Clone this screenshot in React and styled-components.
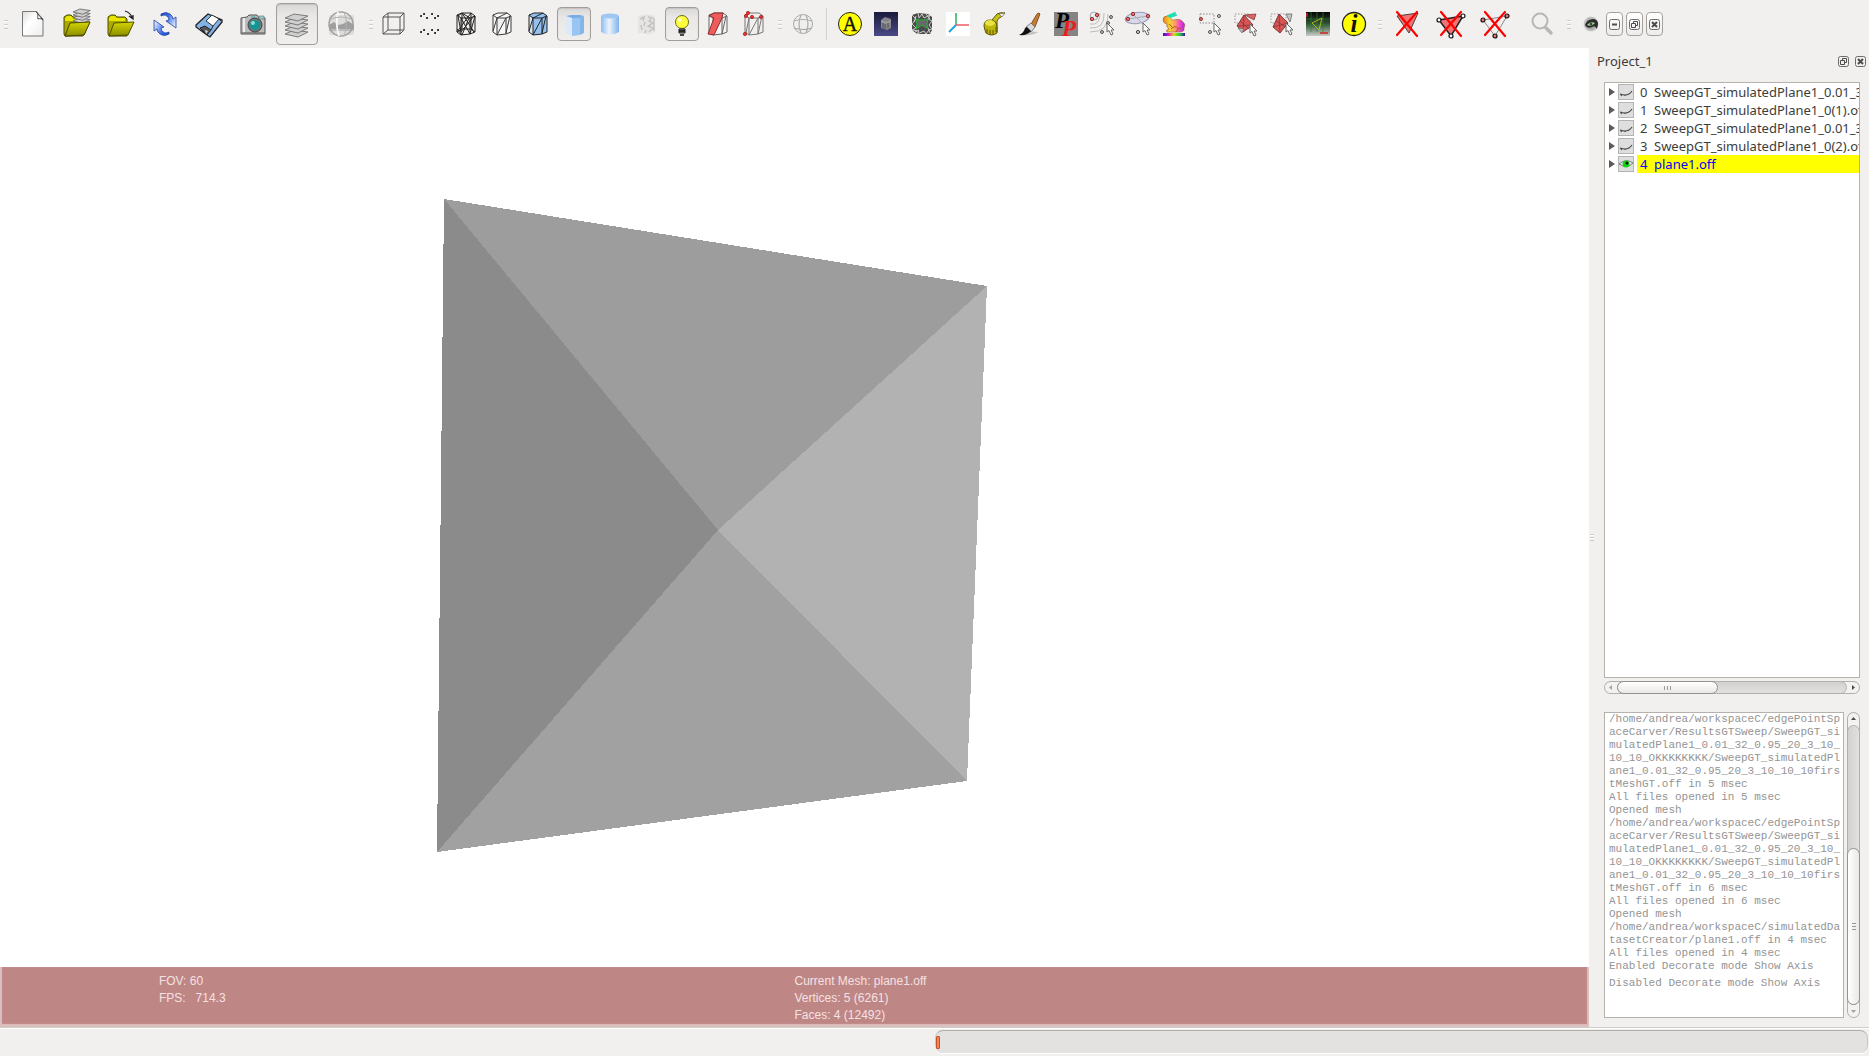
import React from "react";
import styled, { createGlobalStyle, css } from "styled-components";

const Global = createGlobalStyle`
  *, *::before, *::after { box-sizing: border-box; }
  body {
    margin: 0;
    background: #f1f0ee;
    color: #3c3c3c;
    font-family: "Noto Sans", "Open Sans", sans-serif;
    font-size: 13px;
  }
  button { font: inherit; color: inherit; }
  ul, p, h2 { margin: 0; padding: 0; }
`;

const Window = styled.div`
  display: flex;
  flex-direction: column;
  height: 100vh;
  overflow: hidden;
`;

/* ---------- toolbar ---------- */

const ToolBar = styled.header`
  display: flex;
  align-items: center;
  flex: none;
  height: 48px;
`;

const Group = styled.div`
  display: flex;
  align-items: center;
`;

const Grip = styled.span`
  flex: none;
  width: ${(p) => (p.$first ? 11 : 13)}px;
  height: 9px;
  padding: 0 3px 0 ${(p) => (p.$first ? 4 : 6)}px;
  background: repeating-linear-gradient(#cfcdca 0 1px, #ffffff 1px 2px, transparent 2px 4px) content-box;
`;

const Divider = styled.span`
  width: 11px;
  height: 32px;
  padding: 0 5px;
  background: #d3d1ce content-box;
`;

const ToolButton = styled.button`
  display: grid;
  place-items: center;
  flex: none;
  width: ${(p) => (p.$large ? 42 : 34)}px;
  height: ${(p) => (p.$large ? 42 : 34)}px;
  margin: 0 1px;
  padding: 0;
  border: 1px solid transparent;
  border-radius: 4px;
  background: none;
  ${(p) =>
    p.$pressed &&
    css`
      border-color: #a19e9a;
      background: linear-gradient(#d9d8d6, #e9e8e6 30%, #efeeec);
      box-shadow: inset 0 1px 1px #c6c4c1;
    `}
`;

const Glyph = styled.svg`
  display: block;
  width: 28px;
  height: 28px;
  overflow: visible;
  opacity: ${(p) => (p.$faded ? 0.6 : 1)};
`;

const WindowControls = styled.div`
  display: flex;
  align-items: center;
  gap: 3px;
  padding-left: 9px;
`;

const EyeLogo = styled.svg`
  width: 16px;
  height: 16px;
  margin-right: 4px;
`;

const ControlButton = styled.button`
  display: grid;
  place-items: center;
  width: 17px;
  height: 24px;
  padding: 0;
  border: 1px solid #a5a29e;
  border-radius: 4px;
  background: linear-gradient(#ffffff, #edecea);
`;

const SmallGlyph = styled.svg`
  display: block;
  width: 11px;
  height: 11px;
`;

/* ---------- centre ---------- */

const Workspace = styled.div`
  display: flex;
  flex: 1;
  min-height: 0;
`;

const Viewport = styled.main`
  display: flex;
  flex-direction: column;
  flex: 1;
  min-width: 0;
  background: #ffffff;
`;

const Scene = styled.svg`
  flex: 1;
  width: 100%;
  min-height: 0;
`;

const InfoBar = styled.div`
  display: grid;
  grid-template-columns: 10% 40% 50%;
  flex: none;
  height: 60px;
  padding-top: 6px;
  background: #bf8686;
  box-shadow: inset 2px 0 1px #dcbfbf, inset -2px -3px 1px #dcc0c0;
  color: #f4e2e2;
  font: 12px/17px "Liberation Sans", Arial, sans-serif;
  white-space: pre;
`;

const InfoColumn = styled.div`
  grid-column: ${(p) => p.$column};
`;

const Splitter = styled.div`
  display: flex;
  align-items: center;
  flex: none;
  width: 8px;
  padding-left: 1px;

  &::before {
    content: "";
    width: 4px;
    height: 7px;
    background: repeating-linear-gradient(#cfcdca 0 1px, #ffffff 1px 2px, transparent 2px 3px);
  }
`;

/* ---------- dock ---------- */

const Dock = styled.aside`
  display: flex;
  flex-direction: column;
  flex: none;
  width: 272px;
  padding-bottom: 9px;
`;

const DockTitle = styled.div`
  display: flex;
  align-items: center;
  flex: none;
  gap: 6px;
  height: 34px;
  padding: 0 3px 8px 0;
`;

const DockName = styled.h2`
  flex: 1;
  font-size: 13px;
  font-weight: 400;
  line-height: 16px;
`;

const DockButton = styled.button`
  display: block;
  padding: 0;
  border: 0;
  background: none;
`;

const DockBody = styled.div`
  display: flex;
  flex-direction: column;
  flex: 1;
  min-height: 0;
  padding: 0 9px 0 7px;
`;

const Tree = styled.ul`
  flex: 1;
  min-height: 0;
  overflow: hidden;
  border: 1px solid #b5b2ae;
  background: #ffffff;
  list-style: none;
`;

const TreeRow = styled.li`
  display: grid;
  grid-template-columns: 13px 19px 1fr;
  align-items: center;
  height: 18px;
`;

const Expander = styled.button`
  width: 6px;
  height: 8px;
  margin-left: 4px;
  padding: 0;
  border: 0;
  background: #5b5b5b;
  clip-path: polygon(0 0, 100% 50%, 0 100%);
`;

const EyeBox = styled.svg`
  width: 16px;
  height: 16px;
  border: 1px solid #b4b4b4;
  background: #dedede;
`;

const MeshLabel = styled.span`
  display: flex;
  overflow: hidden;
  padding-left: 3px;
  line-height: 18px;
  white-space: nowrap;
  color: ${(p) => (p.$selected ? "#0000ff" : "#3c3c3c")};
  background: ${(p) => (p.$selected ? "#ffff00" : "transparent")};
`;

const MeshIndex = styled.span`
  flex: none;
  width: 14px;
`;

const ScrollBar = styled.div`
  display: flex;
  flex-direction: ${(p) => (p.$vertical ? "column" : "row")};
  flex: none;
  ${(p) => (p.$vertical ? "width: 13px;" : "height: 13px; margin: 3px 0 18px;")}
  border-radius: 7px;
  box-shadow: inset 0 0 0 1px #b3b0ac;
  background: #f3f2f0;
`;

const ScrollArrow = styled.button`
  display: grid;
  place-items: center;
  flex: none;
  width: 13px;
  height: 13px;
  padding: 0;
  border: 0;
  background: none;

  svg { display: block; width: 5px; height: 5px; }
`;

const Track = styled.div`
  display: flex;
  flex-direction: ${(p) => (p.$vertical ? "column" : "row")};
  justify-content: ${(p) => (p.$end ? "flex-end" : "flex-start")};
  flex: 1;
  border: 1px solid #b3b0ac;
  border-radius: 7px;
  background: linear-gradient(${(p) => (p.$vertical ? "90deg, " : "")}#d3d1cf, #e2e1df);
`;

const Thumb = styled.div`
  display: grid;
  place-items: center;
  flex: none;
  ${(p) =>
    p.$vertical
      ? "height: 157px; margin: 0 -1px -1px;"
      : "width: 101px; margin: -1px 0 -1px -1px;"}
  border: 1px solid #96938f;
  border-radius: 7px;
  background: linear-gradient(${(p) => (p.$vertical ? "90deg, " : "")}#ffffff, #e9e8e6);

  &::before {
    content: "";
    width: ${(p) => (p.$vertical ? 4 : 7)}px;
    height: ${(p) => (p.$vertical ? 7 : 4)}px;
    background: repeating-linear-gradient(
      ${(p) => (p.$vertical ? "" : "90deg, ")}#9c9995 0 1px, transparent 1px 3px
    );
  }
`;

const LogArea = styled.div`
  display: flex;
  flex: none;
  gap: 3px;
  height: 306px;
`;

const Log = styled.div`
  flex: 1;
  min-width: 0;
  overflow: hidden;
  border: 1px solid #b5b2ae;
  background: #ffffff;
  padding: 0 4px;
  color: #949494;
  font: 11px/13px "Liberation Mono", "Courier New", monospace;
  white-space: pre;
`;

const LogTail = styled.p`
  padding-top: 4px;
`;

/* ---------- status bar ---------- */

const StatusBar = styled.footer`
  flex: none;
  height: 29px;
  padding: 2px 1px 3px 50%;
  border-top: 1px solid #cfcdca;
  box-shadow: inset 0 1px #ffffff;
`;

const Progress = styled.div`
  display: flex;
  align-items: center;
  height: 23px;
  border-top: 1px solid #b1aeaa;
  border-left: 1px solid #c9c7c4;
  border-right: 1px solid #c9c7c4;
  border-radius: 8px;
  background: #e3e2e0;
  box-shadow: 0 1px #ffffff;
`;

const ProgressChunk = styled.div`
  width: 4px;
  height: 13px;
  border: 1px solid #c2522a;
  border-radius: 1px;
  background: #f58452;
`;

/* ---------- drawings, all centred on the origin ---------- */

const cylinderTop = "M-9-9L-4-11L5-11L9-8L4-6L-5-6Z";
const cylinderSides = "M-9-9V8L-5 11V-6M-5 11L4 10V-6M4 10L9 8V-8";

const RedCross = () => (
  <path d="M-10-12L10 12M10-12L-10 11" stroke="#ff0000" strokeWidth="2.2" strokeLinecap="round" />
);

const Cursor = ({ x = 4, y = 0 }) => (
  <path
    transform={`translate(${x} ${y})`}
    d="M0 0V9L2 7.500L4 12L6 11L4 7H7Z"
    fill="#fff"
    stroke="#666"
    strokeWidth="1"
  />
);

const Folder = () => (
  <>
    <path d="M-13-7L-10-9H-6L-4-7H4L6-5V12H-12L-13 10Z" fill="#a9a900" stroke="#4e4e00" />
    <path d="M-12-6L-10-8H-6L-4-6H4V-3H-12Z" fill="#e6e600" />
    <path d="M-7-1L13-2L7 11L-12 12Z" fill="url(#folderFront)" stroke="#4e4e00" />
  </>
);

const Sheets = ({ ys, scale = 1, stroke = "#6f6f6f" }) =>
  ys.map((y) => (
    <path
      key={y}
      transform={`translate(0 ${y}) scale(${scale} ${scale})`}
      d="M-12 0L-3-4L11-2L1 3Z"
      fill="#cfcfcf"
      stroke={stroke}
      strokeWidth={0.9 / scale}
    />
  ));

const drawings = {
  newDoc: (
    <>
      <path d="M-10.500-12.500H3L10-5V12H-10.500Z" fill="url(#paper)" stroke="#777" />
      <path d="M3-12.500C6-11 4-6 5-5C7-6 9-5 10-4Z" fill="#fff" stroke="#444" />
    </>
  ),
  openProject: (
    <>
      <Folder />
      <g transform="translate(5 -8)">
        <Sheets ys={[5, 2, -1, -4]} scale={0.75} />
      </g>
      <path d="M-7-1L13-2L7 11L-12 12Z" fill="url(#folderFront)" stroke="#4e4e00" />
    </>
  ),
  open: (
    <>
      <Folder />
      <path d="M4-13Q10-11 11-6M8-8L12-5L12-9" fill="none" stroke="#222" strokeWidth="1.300" />
    </>
  ),
  reload: (
    <>
      <path d="M-4-10Q1-13 5-10Q8-8 8-5L11-7V4L1-3L4-4Q4-8 0-9Q-2-9-4-8Z" fill="url(#blueArrow)" stroke="#23449c" strokeWidth="0.800" />
      <path d="M4 10Q-1 13-5 10Q-8 8-8 5L-11 7V-4L-1 3L-4 4Q-4 8 0 9Q2 9 4 8Z" fill="url(#blueArrowBack)" stroke="#23449c" strokeWidth="0.800" />
    </>
  ),
  save: (
    <>
      <path d="M-13 1L-1-10L13-4V-2L1 13L-2 11L-13 3Z" fill="#82b4e6" stroke="#222" strokeWidth="1.300" />
      <path d="M-3-3L3-9L10-5L4 2Z" fill="#fff" stroke="#333" />
      <path d="M-9 4L-4 2L2 6L-2 11Z" fill="#555" stroke="#222" />
      <path d="M-4 6L-1 7L-3 10Z" fill="#ddd" />
      <path d="M4 2L2 6M10-5L12-3" stroke="#222" />
    </>
  ),
  camera: (
    <>
      <path d="M-12-6L-6-7L-4-9H4L6-6H12V10H-12Z" fill="#bcbcbc" stroke="#555" />
      <path d="M-9-6V9" stroke="#eee" strokeWidth="2" />
      <path d="M-11 9H12" stroke="#777" strokeWidth="1.500" />
      <rect x="-2" y="-8" width="4" height="3" fill="#79b7b7" />
      <rect x="6" y="-8" width="5" height="3" fill="#9cc" stroke="#577" strokeWidth="0.600" />
      <circle cx="2" cy="1" r="7" fill="#6d7676" stroke="#444" />
      <circle cx="2" cy="1" r="5" fill="#159494" />
      <circle cx="0" cy="-1" r="2" fill="#86e0dc" />
    </>
  ),
  layers: <Sheets ys={[10, 6, 2, -2, -6]} />,
  globePhoto: (
    <>
      <rect x="-12" y="-9" width="25" height="20" rx="2" fill="#cfcfcf" />
      <path d="M-12 1L-7-2L-3 1L2 0L7-3L13 1V5H-12Z" fill="#6b6b6b" />
      <path d="M-12 6H13" stroke="#9b9b9b" strokeWidth="2" />
      <circle r="12" fill="none" stroke="#6b6b6b" strokeWidth="1.500" />
      <path d="M-3-12Q-6 0-2 12" fill="none" stroke="#ffffff" strokeWidth="1.800" />
      <path d="M-10-5Q0-9 10-5M3-12Q8 0 3 12" fill="none" stroke="#8a8a8a" />
    </>
  ),
  box: (
    <path d="M-11-7H6V10H-11ZM-6-11H10V6H-6ZM-11-7L-6-11M6-7L10-11M6 10L10 6M-11 10L-6 6" fill="none" stroke="#555" />
  ),
  points: (
    <path
      d="M-9-8h.1M-6-10h.1M-3-6h.1M2-10h.1M5-6h.1M8-8h.1M-9 8h.1M-6 6h.1M-2 10h.1M2 6h.1M5 9h.1M8 6h.1"
      stroke="#111" strokeWidth="2" strokeLinecap="round"
    />
  ),
  wire: (
    <path
      d={cylinderTop + cylinderSides + "M-8-8L-4-11L4-6M-9 5L-4 11L3-6M-5-6L4 10L9-8M-8-8L-5 8L8-8M-4-11L8 8M-9 8L5-11M-9 8L-4 5L5 5L9 8M-4-11V5M5-11V5"}
      fill="none" stroke="#222"
    />
  ),
  hidden: (
    <path d={cylinderTop + cylinderSides + "M-9 7L-5-6M-5 11L4-6M4 9L8-8M-5-6L5-11"} fill="#f8f8f8" stroke="#3a3a3a" />
  ),
  flatLines: (
    <>
      <path d="M-9-8V8L-5 11L4 10L9 8V-9L5-11H-4Z" fill="#93c1f0" />
      <path d="M-9-8L-5-6V11L-9 8Z" fill="#d8e6f5" />
      <path d={cylinderTop + cylinderSides + "M-9 7L-5-6M-5 11L4-6M4 9L8-8M-5-6L5-11"} fill="none" stroke="#222" />
    </>
  ),
  flat: (
    <>
      <path d="M-8-8L-2-6V12L-8 9Z" fill="#dde9f6" />
      <path d="M-2-6H6V11L-2 12Z" fill="#98c5f1" />
      <path d="M6-6L10-8V9L6 11Z" fill="#85b6e8" />
      <path d="M-8-8L-3-9H6L10-8L6-6H-2Z" fill="#78aee4" />
    </>
  ),
  smooth: (
    <>
      <path d="M-9-8V8Q0 13 9 8V-8Z" fill="url(#smoothSide)" />
      <ellipse cy="-8" rx="9" ry="2.500" fill="#9fc7f0" />
    </>
  ),
  texture: (
    <>
      <path d="M-8-7Q0-12 9-8V8Q3 12-4 9L-8 9Z" fill="#e6e5e3" />
      <path d="M2-7L6-6L3-3L7-1L2 2L7 4L3 8M-6-5L-2-7L-3-3M8-6V7M-1-2L-2 2M-5 1L-4 6M0 6L-1 9" stroke="#c6c4c2" strokeWidth="1.500" fill="none" />
    </>
  ),
  light: (
    <>
      <circle cy="-2" r="6.500" fill="#ffff3c" stroke="#6d6d18" />
      <circle cx="-2" cy="-4" r="2" fill="#ffffc8" />
      <path d="M-3 5H3V9H-3Z" fill="#777" stroke="#222" />
      <path d="M-3 7H3M-2 11H2" stroke="#111" strokeWidth="1.400" />
    </>
  ),
  backFace: (
    <>
      <path d={cylinderTop + cylinderSides + "M4 10L8-8"} fill="#f5f5f5" stroke="#666" />
      <path d="M-9-8L-4-11H5L4-6L-4 11L-10 10L-4-6Z" fill="#f05c5c" stroke="#8d2c2c" />
    </>
  ),
  selectedVerts: (
    <>
      <path d={cylinderTop + cylinderSides + "M-5 11L4-6M4 10L8-8M-8 9L-5-6"} fill="none" stroke="#777" />
      {[[-8, -8], [-6, -11], [-2, -7], [7, -7], [-9, 10]].map(([x, y]) => (
        <circle key={`${x}${y}`} cx={x} cy={y} r="1.700" fill="#ee2c2c" stroke="#8b1515" strokeWidth="0.600" />
      ))}
    </>
  ),
  globe: (
    <>
      <circle r="9.500" fill="#efefee" stroke="#aaa" />
      <path d="M-9-3Q0-6 9-3M-9 4Q0 7 9 4M-2-9Q-6 0-2 9M3-9Q7 0 3 9" fill="none" stroke="#aaa" strokeWidth="1.200" />
    </>
  ),
  letterA: (
    <>
      <circle r="11.500" fill="#ffff00" stroke="#222" />
      <text y="7" textAnchor="middle" fontFamily="Liberation Serif, serif" fontSize="20" fill="#111" stroke="#111" strokeWidth="0.400">A</text>
    </>
  ),
  temple: (
    <>
      <rect x="-12" y="-12" width="24" height="24" fill="url(#night)" />
      <path d="M-5-4L-1-7L5-5V4L1 6L-5 4Z" fill="#85858a" />
      <path d="M-3-1V4M-1 0V5M2-1V4" stroke="#4c4c52" />
      <path d="M-5-3L0-1L5-3" stroke="#a9a9ad" fill="none" />
    </>
  ),
  tessellated: (
    <>
      <path d="M-10-9L-4-11L6-10L10-7V6L8 10L-5 10L-10 6Z" fill="#4b4b4b" />
      <path
        d="M-10-9L-6-5L-10 0L-6 4L-10 6L-3 7L-5 10L2 7L4 10L7 6L10 5L7 1L10-3L6-5L8-9L2-6L0-10L-3-6L-4-11M-8-2L-6-8M8-5L4-10M-7 8L-3 6M8 9L6 4"
        fill="none" stroke="#d8d8d8" strokeWidth="0.900"
      />
      <path d="M-6-5L-2-4L3-4L6-5L5 0L6 4L3 3L0 1L-3 3L-6 5L-5 0Z" fill="#686868" stroke="#22b833" />
    </>
  ),
  axes: (
    <>
      <rect x="-12" y="-12" width="24" height="24" fill="#fff" />
      <path d="M-2 1V-11" stroke="#23b254" strokeWidth="1.500" />
      <path d="M-2 1H11" stroke="#ef5965" strokeWidth="1.500" />
      <path d="M-2 1L-9 8" stroke="#18a7e8" strokeWidth="2" />
    </>
  ),
  tape: (
    <>
      <path d="M-2-4L3-10Q6-12 11-11L7-7Q4-6 3-3V8L-1 10Z" fill="#c9c11a" stroke="#5a5600" />
      <path d="M5-10L11-11L8-7Z" fill="#f2f2f2" stroke="#555" strokeWidth="0.600" />
      <path d="M-10 2Q-10-4-4-4Q3-4 3 3V9Q-2 13-8 9Q-9 7-10 2Z" fill="#bdb50c" stroke="#5a5600" />
      <ellipse cx="-4" cy="-1" rx="5" ry="3" fill="#e9e243" />
      <path d="M-7 5V9M-4 6V11M-1 6V10M2 3V8" stroke="#5a5600" />
    </>
  ),
  brush: (
    <>
      <path d="M-9 11Q2 12 8 8L-2 7Z" fill="#c2c2c2" />
      <path d="M1 0L7-10Q9-12 10-10L5 3Z" fill="#c97b33" stroke="#683d12" strokeWidth="0.800" />
      <path d="M-4 3L1-1L5 3L1 8Z" fill="#d9d9d9" stroke="#666" strokeWidth="0.800" />
      <path d="M-11 11Q-6 9-5 4L-3 3L1 7Q-3 12-11 11Z" fill="#111" />
    </>
  ),
  doubleP: (
    <>
      <rect x="-12" y="-12" width="24" height="24" fill="#868483" />
      <text x="-11" y="4" fontFamily="Liberation Serif, serif" fontStyle="italic" fontWeight="700" fontSize="23" fill="#000">P</text>
      <text x="-4" y="12" fontFamily="Liberation Serif, serif" fontStyle="italic" fontWeight="700" fontSize="23" fill="#ef1c1c">P</text>
    </>
  ),
  pickPoints: (
    <>
      <path d="M-12 0Q-2 2-2-11M-12 4Q3 5 2-11M-12 8Q7 8 6-10" fill="none" stroke="#bcbcbc" />
      <circle cx="-8" cy="-8" r="4" fill="#eee" stroke="#aaa" />
      {[[-5, -9], [-10, -5]].map(([x, y]) => (
        <circle key={x} cx={x} cy={y} r="1.700" fill="#f26b6b" stroke="#883333" />
      ))}
      {[[9, -7], [6, -1], [0, 8]].map(([x, y]) => (
        <circle key={x} cx={x} cy={y} r="1.500" fill="#bbb" stroke="#555" />
      ))}
      <Cursor x={5} y={-1} />
    </>
  ),
  pickEllipse: (
    <>
      <ellipse cy="-6" rx="12" ry="5.500" transform="rotate(-8)" fill="#d7d9ea" stroke="#9a9cb5" />
      <path d="M-10-5L10-8M-5-10L6 1" stroke="#aaa" />
      {[[-5, -10], [10, -8], [-10, -5]].map(([x, y]) => (
        <circle key={x} cx={x} cy={y} r="1.700" fill="#f26b6b" stroke="#883333" />
      ))}
      <circle cx="0" cy="8" r="1.600" fill="#ccc" stroke="#444" />
      <Cursor x={5} y={-1} />
    </>
  ),
  bunny: (
    <>
      <rect x="-11" y="9" width="22" height="3" fill="url(#rainbow)" />
      <path d="M-11-4Q-11-8-7-8Q-5-9-4-7Q-3-3 0-4Q6-6 9-2Q12 0 10 4Q11 7 7 8H-7Q-9 6-5 5Q-8 3-7 0Q-11-1-11-4Z" fill="url(#rainbowBody)" stroke="#9b5a30" strokeWidth="0.600" />
      <path d="M-6-8L-1-10L1-11M-4-7L2-9" stroke="#22dcb4" strokeWidth="2" strokeLinecap="round" />
      <path d="M-3 5Q1 1 4 4M2 8Q3 4 7 4M-5 0L-2 3" stroke="#a3521e" fill="none" strokeWidth="0.900" />
    </>
  ),
  pickRect: (
    <>
      <rect x="-10" y="-10" width="14" height="9" fill="none" stroke="#888" strokeDasharray="1.500 1.500" />
      <circle cx="-9" cy="-5" r="1.500" fill="#f26b6b" stroke="#883333" />
      <circle cx="9" cy="-8" r="1.500" fill="#ccc" stroke="#555" />
      <circle cx="0" cy="8" r="1.500" fill="#ccc" stroke="#555" />
      <Cursor x={4} y={-1} />
    </>
  ),
  pickFaces: (
    <>
      <rect x="-11" y="-10" width="15" height="9" fill="none" stroke="#999" strokeDasharray="1.500 1.500" />
      <path d="M-1-9L10-10L8-4Z" fill="#dd6464" stroke="#843838" strokeWidth="0.800" />
      <path d="M-9 2L-2-9L7 1L-3 8Z" fill="#d95555" stroke="#843838" />
      <path d="M-9 2L7 1M-2-9L-3 8M-6-3L3 5" stroke="#843838" strokeWidth="0.800" />
      <path d="M-8 4L-2 5L-4 9Z" fill="#bbb" stroke="#777" strokeWidth="0.800" />
      <Cursor x={4} y={0} />
    </>
  ),
  pickConnected: (
    <>
      <rect x="-11" y="-10" width="15" height="9" fill="none" stroke="#999" strokeDasharray="1.500 1.500" />
      <path d="M4-10H10L8-2Z" fill="#c6c6c6" stroke="#666" strokeWidth="0.800" />
      <path d="M-9 3L-3-10L6-1L-2 9Z" fill="#d95555" stroke="#843838" />
      <path d="M-9 3L6-1M-3-10L-2 9M-6-3L4 3" stroke="#843838" strokeWidth="0.800" />
      <Cursor x={4} y={-1} />
    </>
  ),
  raster: (
    <>
      <rect x="-12" y="-12" width="24" height="24" fill="url(#dusk)" />
      <path d="M-12-5H12M-12 1H12M-7-12V8M-1-12V8M5-12V8" stroke="#2f7a35" strokeWidth="0.700" />
      <path d="M-6-1L4-6L1 6Z" fill="none" stroke="#b3b81a" />
      <path d="M-11-11V-7M2 9H10" stroke="#d12626" strokeWidth="1.500" />
    </>
  ),
  info: (
    <>
      <circle r="11.500" fill="#ffff00" stroke="#222" strokeWidth="1.300" />
      <text y="8" textAnchor="middle" fontFamily="Liberation Serif, serif" fontStyle="italic" fontWeight="700" fontSize="25" fill="#111">i</text>
    </>
  ),
  deleteFaces: (
    <>
      <path d="M-10-8L11-11L2 9Z" fill="#f37272" stroke="#444" />
      <RedCross />
    </>
  ),
  deleteFacesVerts: (
    <>
      <path d="M-12-4L12-8L0 12Z" fill="#f37272" stroke="#222" strokeWidth="1.500" />
      {[[-12, -4], [12, -8], [0, 12]].map(([x, y]) => (
        <circle key={x} cx={x} cy={y} r="2" fill="#fff" stroke="#111" strokeWidth="1.200" />
      ))}
      <RedCross />
    </>
  ),
  deleteVerts: (
    <>
      <path d="M-12-4L12-8L0 12Z" fill="none" stroke="#888" />
      {[[-12, -4], [12, -8], [0, 12]].map(([x, y]) => (
        <circle key={x} cx={x} cy={y} r="2" fill="#f47171" stroke="#111" strokeWidth="1.200" />
      ))}
      <RedCross />
    </>
  ),
  search: (
    <>
      <circle cx="1" cy="-3" r="7.500" fill="none" stroke="#b9b7b5" strokeWidth="2" />
      <path d="M7 4L12 9" stroke="#b9b7b5" strokeWidth="3.500" strokeLinecap="round" />
    </>
  ),
};

const Gradients = () => (
  <Defs width="0" height="0" aria-hidden="true">
    <defs>
      <linearGradient id="folderFront" x1="0" y1="0" x2="0" y2="1">
        <stop offset="0" stopColor="#d6d600" /><stop offset="1" stopColor="#8c8c00" />
      </linearGradient>
      <linearGradient id="paper" x1="0" y1="0" x2="1" y2="1">
        <stop offset="0" stopColor="#dcdcdc" /><stop offset="0.400" stopColor="#ffffff" /><stop offset="1" stopColor="#ededed" />
      </linearGradient>
      <linearGradient id="blueArrow" x1="0" y1="0" x2="1" y2="0.600">
        <stop offset="0" stopColor="#1c4fe0" /><stop offset="0.400" stopColor="#2f63ea" /><stop offset="1" stopColor="#d0dffc" />
      </linearGradient>
      <linearGradient id="blueArrowBack" x1="1" y1="1" x2="0" y2="0.400">
        <stop offset="0" stopColor="#1c4fe0" /><stop offset="0.400" stopColor="#2f63ea" /><stop offset="1" stopColor="#d0dffc" />
      </linearGradient>
      <linearGradient id="smoothSide">
        <stop offset="0" stopColor="#8dbcf0" /><stop offset="0.450" stopColor="#ecf4fc" /><stop offset="1" stopColor="#7fb2ec" />
      </linearGradient>
      <linearGradient id="night" x1="0" y1="0" x2="0" y2="1">
        <stop offset="0" stopColor="#1a1a3c" /><stop offset="1" stopColor="#4a4a88" />
      </linearGradient>
      <linearGradient id="dusk" x1="0" y1="0" x2="0" y2="1">
        <stop offset="0" stopColor="#050505" /><stop offset="0.500" stopColor="#325535" /><stop offset="1" stopColor="#c9cec9" />
      </linearGradient>
      <linearGradient id="rainbow">
        <stop offset="0" stopColor="#1b1bd8" /><stop offset="0.250" stopColor="#e01bb4" /><stop offset="0.500" stopColor="#e8d21b" />
        <stop offset="0.750" stopColor="#1bd83c" /><stop offset="1" stopColor="#3514b0" />
      </linearGradient>
      <linearGradient id="rainbowBody">
        <stop offset="0" stopColor="#ef7a20" /><stop offset="0.300" stopColor="#f0d52a" /><stop offset="0.550" stopColor="#ff9c6b" />
        <stop offset="0.800" stopColor="#f03ccd" /><stop offset="1" stopColor="#a02ce8" />
      </linearGradient>
      <radialGradient id="eyeBall">
        <stop offset="0" stopColor="#666" /><stop offset="1" stopColor="#d0d0d0" />
      </radialGradient>
    </defs>
  </Defs>
);

const Defs = styled.svg`
  display: block;
  flex: none;
`;

const fileTools = [
  ["newDoc", "New project"],
  ["openProject", "Open project"],
  ["open", "Import mesh"],
  ["reload", "Reload"],
  ["save", "Export mesh"],
  ["camera", "Snapshot"],
  ["layers", "Show layers", { pressed: true }],
  ["globePhoto", "Raster mode", { faded: true }],
];

const renderTools = [
  ["box", "Bounding box"],
  ["points", "Points"],
  ["wire", "Wireframe"],
  ["hidden", "Hidden lines"],
  ["flatLines", "Flat lines"],
  ["flat", "Flat", { pressed: true }],
  ["smooth", "Smooth"],
  ["texture", "Texture"],
  ["light", "Light", { pressed: true }],
  ["backFace", "Back-face culling"],
  ["selectedVerts", "Selected vertices"],
];

const editTools = [
  ["letterA", "Align"],
  ["temple", "Photo registration"],
  ["tessellated", "Z-painting"],
  ["axes", "Reference frame"],
  ["tape", "Measure"],
  ["brush", "Paint"],
  ["doubleP", "Pick points"],
  ["pickPoints", "Select near points"],
  ["pickEllipse", "Select by ellipse"],
  ["bunny", "Quality mapper"],
  ["pickRect", "Select vertices"],
  ["pickFaces", "Select faces"],
  ["pickConnected", "Select connected"],
  ["raster", "Edit raster"],
  ["info", "Info"],
];

const deleteTools = [
  ["deleteFaces", "Delete faces"],
  ["deleteFacesVerts", "Delete faces and vertices"],
  ["deleteVerts", "Delete vertices"],
  ["search", "Search"],
];

function Tool({ name, label, large, pressed = false, faded }) {
  return (
    <ToolButton type="button" aria-label={label} aria-pressed={pressed} $large={large} $pressed={pressed}>
      <Glyph viewBox="-14 -14 28 28" $faded={faded} aria-hidden="true">
        {drawings[name]}
      </Glyph>
    </ToolButton>
  );
}

const Tools = ({ items, large }) =>
  items.map(([name, label, state]) => <Tool key={name} name={name} label={label} large={large} {...state} />);

const controlPaths = {
  minimise: "M3 5.500H8",
  restore: "M4.500 4V2.500H8.500V6.500H7M2.500 4.500H6.500V8.500H2.500Z",
  close: "M3 3L8 8M8 3L3 8",
};

const ControlGlyph = ({ kind }) => (
  <SmallGlyph viewBox="0 0 11 11" aria-hidden="true">
    <rect x="0.500" y="0.500" width="10" height="10" rx="2" fill="none" stroke="#6a6a6a" />
    <path d={controlPaths[kind]} fill="none" stroke="#4c4c4c" strokeWidth={kind === "restore" ? 1 : 2} />
  </SmallGlyph>
);

const meshes = [
  "SweepGT_simulatedPlane1_0.01_32_0.95_20_3_10_10_10.off",
  "SweepGT_simulatedPlane1_0(1).off",
  "SweepGT_simulatedPlane1_0.01_32_0.95_20_3_10_10_10.off",
  "SweepGT_simulatedPlane1_0(2).off",
  "plane1.off",
];
const selectedMesh = 4;

const logLines = [
  "/home/andrea/workspaceC/edgePointSp",
  "aceCarver/ResultsGTSweep/SweepGT_si",
  "mulatedPlane1_0.01_32_0.95_20_3_10_",
  "10_10_OKKKKKKKK/SweepGT_simulatedPl",
  "ane1_0.01_32_0.95_20_3_10_10_10firs",
  "tMeshGT.off in 5 msec",
  "All files opened in 5 msec",
  "Opened mesh",
  "/home/andrea/workspaceC/edgePointSp",
  "aceCarver/ResultsGTSweep/SweepGT_si",
  "mulatedPlane1_0.01_32_0.95_20_3_10_",
  "10_10_OKKKKKKKK/SweepGT_simulatedPl",
  "ane1_0.01_32_0.95_20_3_10_10_10firs",
  "tMeshGT.off in 6 msec",
  "All files opened in 6 msec",
  "Opened mesh",
  "/home/andrea/workspaceC/simulatedDa",
  "tasetCreator/plane1.off in 4 msec",
  "All files opened in 4 msec",
  "Enabled Decorate mode Show Axis",
];

const arrows = {
  left: "M4 0V5L1 2.500Z",
  right: "M1 0V5L4 2.500Z",
  up: "M0 4H5L2.500 1Z",
  down: "M0 1H5L2.500 4Z",
};

const Arrow = ({ dir, dim }) => (
  <ScrollArrow type="button" aria-label={`Scroll ${dir}`}>
    <svg viewBox="0 0 5 5"><path d={arrows[dir]} fill={dim ? "#a5a3a0" : "#4a4a4a"} /></svg>
  </ScrollArrow>
);

export default function App() {
  return (
    <Window>
      <Global />
      <Gradients />

      <ToolBar>
        <Group>
          <Grip $first />
          <Tools items={fileTools} large />
        </Group>
        <Group>
          <Grip />
          <Tools items={renderTools} />
        </Group>
        <Group>
          <Grip />
          <Tool name="globe" label="Globe" />
          <Divider />
          <Tools items={editTools} />
        </Group>
        <Group>
          <Grip />
          <Tools items={deleteTools} large />
        </Group>
        <Group>
          <Grip />
          <WindowControls>
            <EyeLogo viewBox="0 0 16 16" aria-hidden="true">
              <circle cx="8" cy="8" r="7.500" fill="url(#eyeBall)" />
              <path d="M2 9Q4 3 11 3Q15 4 15 8L14 13Q12 9 9 11Q4 13 2 9Z" fill="#2b2b2b" />
              <path d="M4 9Q7 5 12 7Q9 11 4 9Z" fill="#b9d9a8" />
              <circle cx="8" cy="8" r="1.500" fill="#2c5a22" />
            </EyeLogo>
            <ControlButton type="button" aria-label="Minimise"><ControlGlyph kind="minimise" /></ControlButton>
            <ControlButton type="button" aria-label="Restore"><ControlGlyph kind="restore" /></ControlButton>
            <ControlButton type="button" aria-label="Close"><ControlGlyph kind="close" /></ControlButton>
          </WindowControls>
        </Group>
      </ToolBar>

      <Workspace>
        <Viewport>
          <Scene viewBox="0 0 1589 919" shapeRendering="crispEdges" role="img" aria-label="plane1.off">
            <path d="M444 151L987 238L718 482Z" fill="#9d9d9d" />
            <path d="M987 238L967 733L718 482Z" fill="#b2b2b2" />
            <path d="M967 733L437 804L718 482Z" fill="#a1a1a1" />
            <path d="M437 804L444 151L718 482Z" fill="#8b8b8b" />
          </Scene>
          <InfoBar>
            <InfoColumn $column={2}>
              <p>FOV: 60</p>
              <p>{"FPS:   714.3"}</p>
            </InfoColumn>
            <InfoColumn $column={3}>
              <p>Current Mesh: plane1.off</p>
              <p>Vertices: 5 (6261)</p>
              <p>Faces: 4 (12492)</p>
            </InfoColumn>
          </InfoBar>
        </Viewport>

        <Splitter />

        <Dock>
          <DockTitle>
            <DockName>Project_1</DockName>
            <DockButton type="button" aria-label="Float panel"><ControlGlyph kind="restore" /></DockButton>
            <DockButton type="button" aria-label="Close panel"><ControlGlyph kind="close" /></DockButton>
          </DockTitle>
          <DockBody>
            <Tree>
              {meshes.map((name, i) => (
                <TreeRow key={i}>
                  <Expander type="button" aria-label={`Expand ${name}`} />
                  <EyeBox viewBox="0 0 14 14" aria-hidden="true">
                    {i === selectedMesh ? (
                      <>
                        <path d="M0 7Q7 1 14 6Q8 12 0 7Z" fill="#f5f5f5" stroke="#777" />
                        <circle cx="7" cy="7" r="3.500" fill="#13d313" />
                        <circle cx="8" cy="6" r="1.500" fill="#111" />
                      </>
                    ) : (
                      <path d="M1 9Q9 12 13 6M3 9L2 11M6 10V11" fill="none" stroke="#444" strokeWidth="1.200" />
                    )}
                  </EyeBox>
                  <MeshLabel $selected={i === selectedMesh}>
                    <MeshIndex>{i}</MeshIndex>
                    {name}
                  </MeshLabel>
                </TreeRow>
              ))}
            </Tree>
            <ScrollBar>
              <Arrow dir="left" dim />
              <Track><Thumb /></Track>
              <Arrow dir="right" />
            </ScrollBar>
            <LogArea>
              <Log role="log">
                {logLines.map((line, i) => (
                  <p key={i}>{line}</p>
                ))}
                <LogTail>Disabled Decorate mode Show Axis</LogTail>
              </Log>
              <ScrollBar $vertical>
                <Arrow dir="up" />
                <Track $vertical $end><Thumb $vertical /></Track>
                <Arrow dir="down" dim />
              </ScrollBar>
            </LogArea>
          </DockBody>
        </Dock>
      </Workspace>

      <StatusBar>
        <Progress role="progressbar" aria-label="Progress" aria-valuenow={0}>
          <ProgressChunk />
        </Progress>
      </StatusBar>
    </Window>
  );
}
